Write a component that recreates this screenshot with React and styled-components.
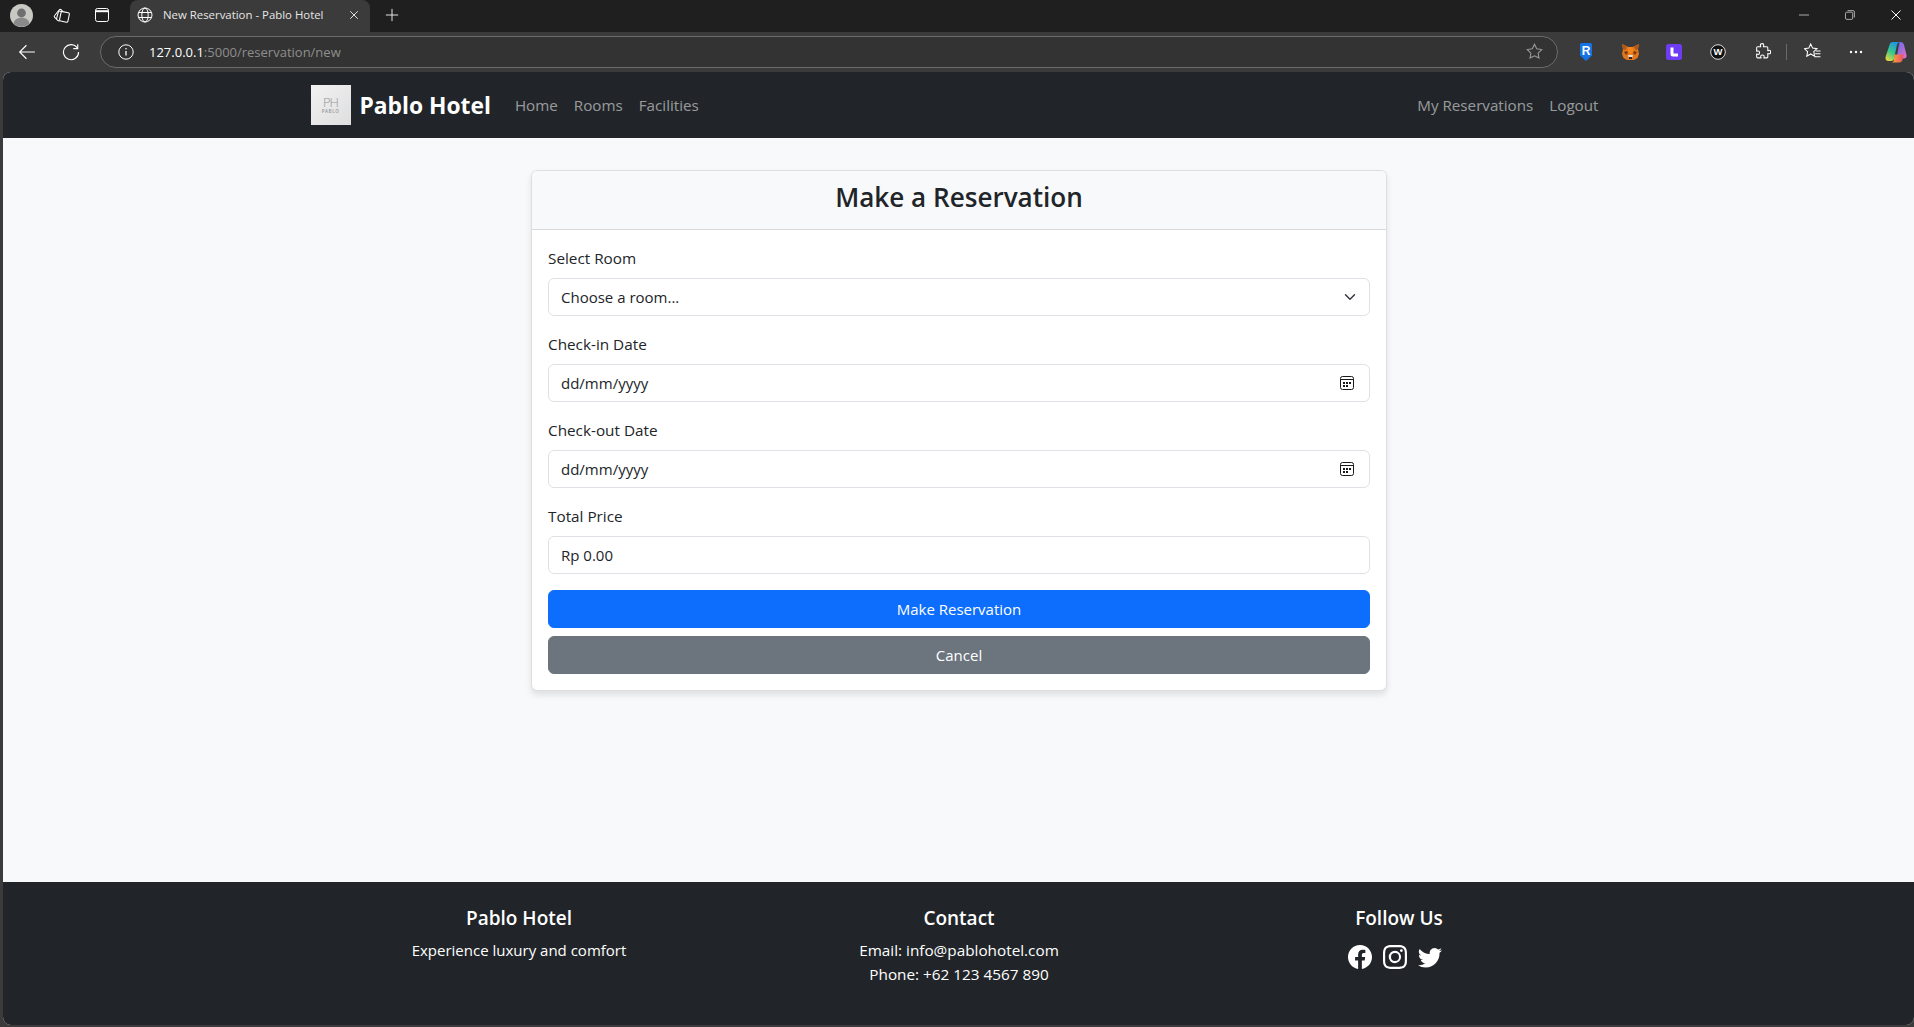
import React from 'react'
import styled, { createGlobalStyle } from 'styled-components'
import { BsFacebook, BsInstagram, BsTwitter } from 'react-icons/bs'

const GlobalStyle = createGlobalStyle`
  html, body {
    margin: 0;
    height: 100%;
    overflow: hidden;
    background: #3b3b3b;
  }
  body {
    font-family: "Open Sans", "Noto Sans", "Liberation Sans", sans-serif;
    font-size: 15px;
    line-height: 24px;
    color: #212529;
  }
  * {
    box-sizing: border-box;
  }
`

const Window = styled.div`
  display: flex;
  flex-direction: column;
  height: 100vh;
`

/* browser chrome */
const TabStrip = styled.div`
  display: flex;
  align-items: stretch;
  flex: none;
  height: 32px;
  background: #1f1f1f;
  color: #fff;
`

const StripButton = styled.div`
  display: flex;
  align-items: center;
  justify-content: center;
  flex: none;
  width: ${(p) => p.$w}px;
  padding-bottom: 2px;
`

const Spacer = styled.div`
  flex: 1;
`

const Tab = styled.div`
  display: flex;
  align-items: center;
  flex: none;
  width: 240px;
  margin-left: 6px;
  padding: 0 11px 2px 7px;
  gap: 10px;
  background: #3b3b3b;
  border-radius: 8px 8px 0 0;
`

const TabTitle = styled.span`
  flex: 1;
  font-size: 11.4px;
  line-height: 16px;
  color: #e6e6e6;
  white-space: nowrap;
`

const WinButton = styled.div`
  display: flex;
  align-items: center;
  justify-content: center;
  flex: none;
  width: ${(p) => (p.$last ? 41 : 46)}px;
  padding-left: ${(p) => (p.$last ? 5 : 0)}px;
  padding-bottom: 2px;
`

const Toolbar = styled.div`
  display: flex;
  align-items: center;
  flex: none;
  height: 40px;
  padding-left: 5px;
  padding-bottom: 1px;
  background: #3b3b3b;
  color: #fff;
`

const ToolButton = styled.div`
  display: flex;
  align-items: center;
  justify-content: center;
  flex: none;
  width: ${(p) => p.$w || 44}px;
`

const AddressBar = styled.div`
  display: flex;
  align-items: center;
  flex: 1;
  height: 32px;
  margin: 0 6px 0 7px;
  padding: 0 14px 0 17px;
  border: 1px solid #6b6b6b;
  border-radius: 16px;
  background: #333;
`

const Url = styled.div`
  flex: 1;
  margin-left: 15px;
  padding-top: 1px;
  font-size: 13px;
  line-height: 16px;
  color: #8e8e8e;
`

const UrlHost = styled.span`
  color: #fff;
`

const ToolDivider = styled.div`
  flex: none;
  width: 1px;
  height: 16px;
  margin: 0 3px 0 2px;
  background: #6b6b6b;
`

/* page */
const Page = styled.div`
  display: flex;
  flex-direction: column;
  flex: 1;
  min-height: 0;
  margin: 0 0 2px 3px;
  background: #f8f9fa;
  border-radius: 8px;
  overflow: hidden;
`

const Navbar = styled.nav`
  flex: none;
  height: 66px;
  background: #212529;
`

const Container = styled.div`
  display: flex;
  align-items: center;
  width: 1320px;
  height: 100%;
  margin: 0 auto;
  padding: 0 12px;
`

const Brand = styled.a`
  display: flex;
  align-items: center;
  gap: 9px;
  margin-right: 16px;
`

const BrandName = styled.span`
  padding-top: 2px;
  font-size: 22.8px;
  font-weight: 700;
  line-height: 30px;
  color: #fff;
`

const Logo = styled.div`
  display: flex;
  flex-direction: column;
  align-items: center;
  justify-content: center;
  width: 40px;
  height: 40px;
  background: linear-gradient(135deg, #f2f2f2, #dedede);
  color: #969696;
`

const LogoMark = styled.span`
  font-size: 13px;
  font-weight: 300;
  line-height: 12px;
  letter-spacing: -1px;
`

const LogoName = styled.span`
  font-size: 4.5px;
  font-weight: 600;
  line-height: 6px;
  letter-spacing: 0.6px;
`

const NavLink = styled.a`
  padding: 8px;
  color: rgba(255, 255, 255, 0.55);
  font-size: 15.2px;
`

const Main = styled.main`
  flex: 1;
  padding: 32px 0 0 1px;
`

const Card = styled.section`
  width: 856px;
  margin: 0 auto;
  background: #fff;
  border: 1px solid rgba(0, 0, 0, 0.125);
  border-radius: 6px;
  box-shadow: 0 4px 6px rgba(0, 0, 0, 0.1);
  overflow: hidden;
`

const CardHeader = styled.header`
  height: 59px;
  padding: 9px 16px 0;
  background: #f8f9fa;
  border-bottom: 1px solid rgba(0, 0, 0, 0.125);
`

const Title = styled.h3`
  margin: 0;
  font-size: 26.1px;
  font-weight: 600;
  line-height: 34px;
  text-align: center;
  color: #212529;
`

const CardBody = styled.div`
  padding: 16px;
`

const Field = styled.div`
  margin-bottom: 16px;
`

const Label = styled.label`
  display: block;
  margin-bottom: 8px;
  font-size: 15.3px;
`

const SelectWrap = styled.div`
  position: relative;
`

const Select = styled.select`
  display: block;
  width: 100%;
  height: 38px;
  padding: 0 36px 0 12px;
  appearance: none;
  font: inherit;
  color: #212529;
  background: #fff;
  border: 1px solid #dee2e6;
  border-radius: 6px;
`

const Chevron = styled.svg`
  position: absolute;
  top: 13px;
  right: 12px;
  width: 16px;
  height: 12px;
  pointer-events: none;
`

const InputBox = styled.div`
  display: flex;
  align-items: center;
  height: 38px;
  padding: 0 15px 0 12px;
  background: #fff;
  border: 1px solid #dee2e6;
  border-radius: 6px;
`

const Input = styled.input`
  flex: 1;
  min-width: 0;
  padding: 0;
  border: 0;
  outline: 0;
  font: inherit;
  color: #212529;
  background: transparent;
`

const Button = styled.button`
  display: block;
  width: 100%;
  height: 38px;
  margin-top: ${(p) => (p.$secondary ? 8 : 0)}px;
  border: 1px solid ${(p) => (p.$secondary ? '#6c757d' : '#0d6efd')};
  border-radius: 6px;
  background: ${(p) => (p.$secondary ? '#6c757d' : '#0d6efd')};
  color: #fff;
  font: inherit;
`

const Footer = styled.footer`
  flex: none;
  height: 143px;
  padding: 24px 0 0 1px;
  background: #212529;
  color: #fff;
`

const FooterGrid = styled.div`
  display: grid;
  grid-template-columns: repeat(3, 1fr);
  width: 1320px;
  margin: 0 auto;
  text-align: center;
`

const FooterTitle = styled.h5`
  margin: 0 0 8px;
  font-size: 19px;
  font-weight: 600;
  line-height: 24px;
`

const FooterText = styled.p`
  margin: 0;
`

const ContactText = styled(FooterText)`
  font-size: 15.3px;
`

const Socials = styled.div`
  display: flex;
  justify-content: center;
  gap: 11px;
  padding: 7px 8px 0 0;
  font-size: 24px;
  line-height: 24px;
`

/* drawn browser icons */
const Glyph = ({ size = 16, fill = 'none', stroke = 'currentColor', sw = 1, children }) => (
  <svg width={size} height={size} viewBox="0 0 16 16" fill={fill} stroke={stroke} strokeWidth={sw}>
    {children}
  </svg>
)

const Avatar = () => (
  <svg width="23" height="23" viewBox="0 0 23 23">
    <circle cx="11.5" cy="11.5" r="11.5" fill="#c9c9c4" />
    <circle cx="11.5" cy="9" r="4.4" fill="#6f6f6f" />
    <path d="M3.5 19.5c1-4.2 4.2-5.700 8-5.700s7 1.500 8 5.700a11.500 11.500 0 0 1-16 0z" fill="#8a8a8a" />
  </svg>
)

const WorkspacesIcon = () => (
  <Glyph size={17}>
    <rect x="6.800" y="4.800" width="8" height="9" rx="1.300" transform="rotate(12 10.800 9.300)" />
    <path d="M6.200 13.500 4 12.200a1.300 1.300 0 0 1-.6-1.500L5 4.800a1.300 1.300 0 0 1 1.600-.9l2.400.6" />
    <path d="M3.300 11.500 1.600 9.800a1.300 1.300 0 0 1 0-1.800L5.800 2.800a1.300 1.300 0 0 1 1.800-.2l1.400 1.200" />
  </Glyph>
)

const SidebarIcon = () => (
  <Glyph>
    <rect x="1.500" y="1.500" width="13" height="13" rx="2" />
    <path d="M1.500 4.200h13" strokeWidth="2" />
  </Glyph>
)

const GlobeIcon = () => (
  <Glyph>
    <circle cx="8" cy="8" r="7" />
    <ellipse cx="8" cy="8" rx="3.200" ry="7" />
    <path d="M1.500 5.500h13M1.500 10.500h13" />
  </Glyph>
)

const CloseIcon = ({ size = 12 }) => (
  <svg width={size} height={size} viewBox="0 0 12 12" fill="none" stroke="currentColor">
    <path d="M1.500 1.500l9 9M10.500 1.500l-9 9" />
  </svg>
)

const PlusIcon = () => (
  <Glyph size={14}>
    <path d="M8 1v14M1 8h14" />
  </Glyph>
)

const MinimizeIcon = () => (
  <Glyph size={10}>
    <path d="M0 8h16" />
  </Glyph>
)

const RestoreIcon = () => (
  <Glyph size={10}>
    <rect x=".8" y="3.500" width="11.500" height="11.500" rx="2" />
    <path d="M4 1h9a2 2 0 0 1 2 2v9" />
  </Glyph>
)

const BackIcon = () => (
  <Glyph size={18}>
    <path d="M15 8H1.500M7.500 2 1.500 8l6 6" />
  </Glyph>
)

const RefreshIcon = () => (
  <Glyph size={18}>
    <path d="M13.800 4.800A6.700 6.700 0 1 0 14.700 8" />
    <path d="M14 1v4h-4" />
  </Glyph>
)

const InfoIcon = () => (
  <Glyph>
    <circle cx="8" cy="8" r="7.200" />
    <path d="M8 7v4.500" strokeWidth="1.300" />
    <circle cx="8" cy="4.800" r=".8" fill="currentColor" stroke="none" />
  </Glyph>
)

const StarIcon = () => (
  <Glyph stroke="#9a9a9a" size={17}>
    <path d="M8 1.200l2.100 4.300 4.700.7-3.400 3.300.8 4.700L8 12l-4.200 2.200.8-4.700L1.200 6.200l4.700-.7z" />
  </Glyph>
)

const RoninIcon = () => (
  <svg width="12" height="18" viewBox="0 0 12 18">
    <path d="M1.500 0h9A1.500 1.500 0 0 1 12 1.500v11L6 18l-6-5.500v-11A1.500 1.500 0 0 1 1.500 0z" fill="#1473e6" />
    <text x="6" y="11.800" textAnchor="middle" fontSize="12" fontWeight="700" fontFamily="Liberation Sans" fill="#fff">R</text>
  </svg>
)

const FoxIcon = () => (
  <svg width="17" height="16" viewBox="0 0 17 16">
    <path d="M0 0l6.500 3h4L17 0l-1 5 1 5-1.500 4-3.500 2H5l-3.500-2L0 10l1-5z" fill="#e2761b" />
    <path d="M0 0l5 2.500L3.500 6 1 5zM17 0l-5 2.500L13.500 6 16 5z" fill="#b0581a" />
    <path d="M6.500 3h4l1 4-3 5-3-5z" fill="#f6851b" />
    <path d="M2 8l3-1 1 2-2 2zM15 8l-3-1-1 2 2 2z" fill="#763d16" />
    <path d="M6 11h5l-1 3H7z" fill="#e4e0dd" />
    <path d="M7 13h3v2H7z" fill="#2a2a2a" />
  </svg>
)

const PurpleIcon = () => (
  <svg width="16" height="16" viewBox="0 0 16 16">
    <rect width="16" height="16" rx="2.500" fill="#6f3cf5" />
    <path d="M4.500 3.500h3v6h4.500v3H7a2.500 2.500 0 0 1-2.500-2.500z" fill="#fff" />
  </svg>
)

const WIcon = () => (
  <svg width="16" height="16" viewBox="0 0 16 16">
    <circle cx="8" cy="8" r="7.300" fill="#111" stroke="#e0e0e0" />
    <text x="8" y="11.300" textAnchor="middle" fontSize="9.500" fontWeight="700" fontFamily="Liberation Sans" fill="#fff">W</text>
  </svg>
)

const PuzzleIcon = () => (
  <Glyph size={17}>
    <path d="M6 1.800c0-1.600 3.200-1.600 3.200 0 0 .7-.3 1-.3 1.700h3.100a1 1 0 0 1 1 1v2.700c.7 0 1-.3 1.500-.3 1.500 0 1.500 3.300 0 3.300-.5 0-.8-.3-1.500-.3v3.100a1 1 0 0 1-1 1H9.300c0-.7.3-1 .3-1.500 0-1.500-3.300-1.500-3.300 0 0 .5.3.8.3 1.500H3.500a1 1 0 0 1-1-1V10.400c.7 0 1 .3 1.500.3 1.600 0 1.600-3.200 0-3.200-.5 0-.8.3-1.500.3V4.500a1 1 0 0 1 1-1h2.800c0-.7-.3-1-.3-1.700z" />
  </Glyph>
)

const FavoritesIcon = () => (
  <Glyph size={17}>
    <path d="M6.300.9l1.800 3.900 4.100.5-3 2.900.8 4.200-3.700-2.100-3.700 2.100.8-4.200-3-2.900 4.100-.5z" />
    <path d="M11 7.500h4.500M10.500 10.200h5M10 13h5.500" />
  </Glyph>
)

const DotsIcon = () => (
  <svg width="14" height="4" viewBox="0 0 14 4" fill="currentColor">
    <circle cx="2" cy="2" r="1.200" />
    <circle cx="7" cy="2" r="1.200" />
    <circle cx="12" cy="2" r="1.200" />
  </svg>
)

const CopilotIcon = () => (
  <svg width="22" height="22" viewBox="0 0 22 22">
    <defs>
      <linearGradient id="cpA" x1="0.700" y1="0" x2="0.200" y2="1">
        <stop offset="0" stopColor="#1f8fe8" />
        <stop offset="0.550" stopColor="#39c98a" />
        <stop offset="1" stopColor="#e8d83a" />
      </linearGradient>
      <linearGradient id="cpB" x1="0" y1="0" x2="1" y2="1">
        <stop offset="0" stopColor="#5b6cf0" />
        <stop offset="1" stopColor="#ee6fc0" />
      </linearGradient>
      <linearGradient id="cpC" x1="0" y1="0" x2="1" y2="0">
        <stop offset="0" stopColor="#f8a93c" />
        <stop offset="1" stopColor="#ef4f5c" />
      </linearGradient>
    </defs>
    <path d="M14.500 1h1c1.800 0 3 1 3.500 3l2.500 10c.5 2.500-1 3.500-3 3.500h-7z" fill="url(#cpB)" />
    <path d="M8 1h7.500c-1.800 0-3 1-3.600 3L9 18c-.5 1.500-1.500 2-3 2H3.500C1 20 0 18 .7 15.500L4.500 4C5 2 6 1 8 1z" fill="url(#cpA)" />
    <path d="M9.500 13.500h9l-1 5.500c-.4 1.600-1.500 2.500-3 2.500H6.500c1.500 0 2-.7 2.300-2z" fill="url(#cpC)" />
  </svg>
)

const ChevronIcon = () => (
  <Chevron viewBox="0 0 16 16" fill="none" stroke="#343a40" strokeWidth="2" strokeLinecap="round" strokeLinejoin="round">
    <path d="M2 5l6 6 6-6" />
  </Chevron>
)

const CalendarIcon = () => (
  <svg width="14" height="14" viewBox="0 0 14 14" fill="none" stroke="#1a1a1a">
    <rect x=".5" y=".5" width="13" height="13" rx="2" />
    <path d="M.5 3.500h13" />
    <path d="M3 6h2v2H3zM6 6h2v2H6zM9 6h2v2H9zM3 9h2v2H3zM6 9h2v2H6z" fill="#1a1a1a" stroke="none" />
  </svg>
)

function DateField({ label }) {
  return (
    <Field>
      <Label>{label}</Label>
      <InputBox>
        <Input readOnly value="dd/mm/yyyy" />
        <CalendarIcon />
      </InputBox>
    </Field>
  )
}

function BrowserChrome() {
  return (
    <>
      <TabStrip>
        <StripButton $w={42}><Avatar /></StripButton>
        <StripButton $w={38}><WorkspacesIcon /></StripButton>
        <StripButton $w={44}><SidebarIcon /></StripButton>
        <Tab>
          <GlobeIcon />
          <TabTitle>New Reservation - Pablo Hotel</TabTitle>
          <CloseIcon size={10} />
        </Tab>
        <StripButton $w={44}><PlusIcon /></StripButton>
        <Spacer />
        <WinButton><MinimizeIcon /></WinButton>
        <WinButton><RestoreIcon /></WinButton>
        <WinButton $last><CloseIcon /></WinButton>
      </TabStrip>
      <Toolbar>
        <ToolButton><BackIcon /></ToolButton>
        <ToolButton><RefreshIcon /></ToolButton>
        <AddressBar>
          <InfoIcon />
          <Url><UrlHost>127.0.0.1</UrlHost>:5000/reservation/new</Url>
          <StarIcon />
        </AddressBar>
        <ToolButton><RoninIcon /></ToolButton>
        <ToolButton><FoxIcon /></ToolButton>
        <ToolButton><PurpleIcon /></ToolButton>
        <ToolButton><WIcon /></ToolButton>
        <ToolButton><PuzzleIcon /></ToolButton>
        <ToolDivider />
        <ToolButton><FavoritesIcon /></ToolButton>
        <ToolButton><DotsIcon /></ToolButton>
        <ToolButton $w={36}><CopilotIcon /></ToolButton>
      </Toolbar>
    </>
  )
}

export default function App() {
  return (
    <Window>
      <GlobalStyle />
      <BrowserChrome />
      <Page>
        <Navbar>
          <Container>
            <Brand>
              <Logo>
                <LogoMark>PH</LogoMark>
                <LogoName>PABLO</LogoName>
              </Logo>
              <BrandName>Pablo Hotel</BrandName>
            </Brand>
            <NavLink>Home</NavLink>
            <NavLink>Rooms</NavLink>
            <NavLink>Facilities</NavLink>
            <Spacer />
            <NavLink>My Reservations</NavLink>
            <NavLink>Logout</NavLink>
          </Container>
        </Navbar>
        <Main>
          <Card>
            <CardHeader>
              <Title>Make a Reservation</Title>
            </CardHeader>
            <CardBody>
              <Field>
                <Label>Select Room</Label>
                <SelectWrap>
                  <Select defaultValue="">
                    <option value="">Choose a room...</option>
                  </Select>
                  <ChevronIcon />
                </SelectWrap>
              </Field>
              <DateField label="Check-in Date" />
              <DateField label="Check-out Date" />
              <Field>
                <Label>Total Price</Label>
                <InputBox>
                  <Input readOnly value="Rp 0.00" />
                </InputBox>
              </Field>
              <Button>Make Reservation</Button>
              <Button $secondary>Cancel</Button>
            </CardBody>
          </Card>
        </Main>
        <Footer>
          <FooterGrid>
            <div>
              <FooterTitle>Pablo Hotel</FooterTitle>
              <FooterText>Experience luxury and comfort</FooterText>
            </div>
            <div>
              <FooterTitle>Contact</FooterTitle>
              <ContactText>Email: info@pablohotel.com</ContactText>
              <ContactText>Phone: +62 123 4567 890</ContactText>
            </div>
            <div>
              <FooterTitle>Follow Us</FooterTitle>
              <Socials>
                <BsFacebook />
                <BsInstagram />
                <BsTwitter />
              </Socials>
            </div>
          </FooterGrid>
        </Footer>
      </Page>
    </Window>
  )
}
